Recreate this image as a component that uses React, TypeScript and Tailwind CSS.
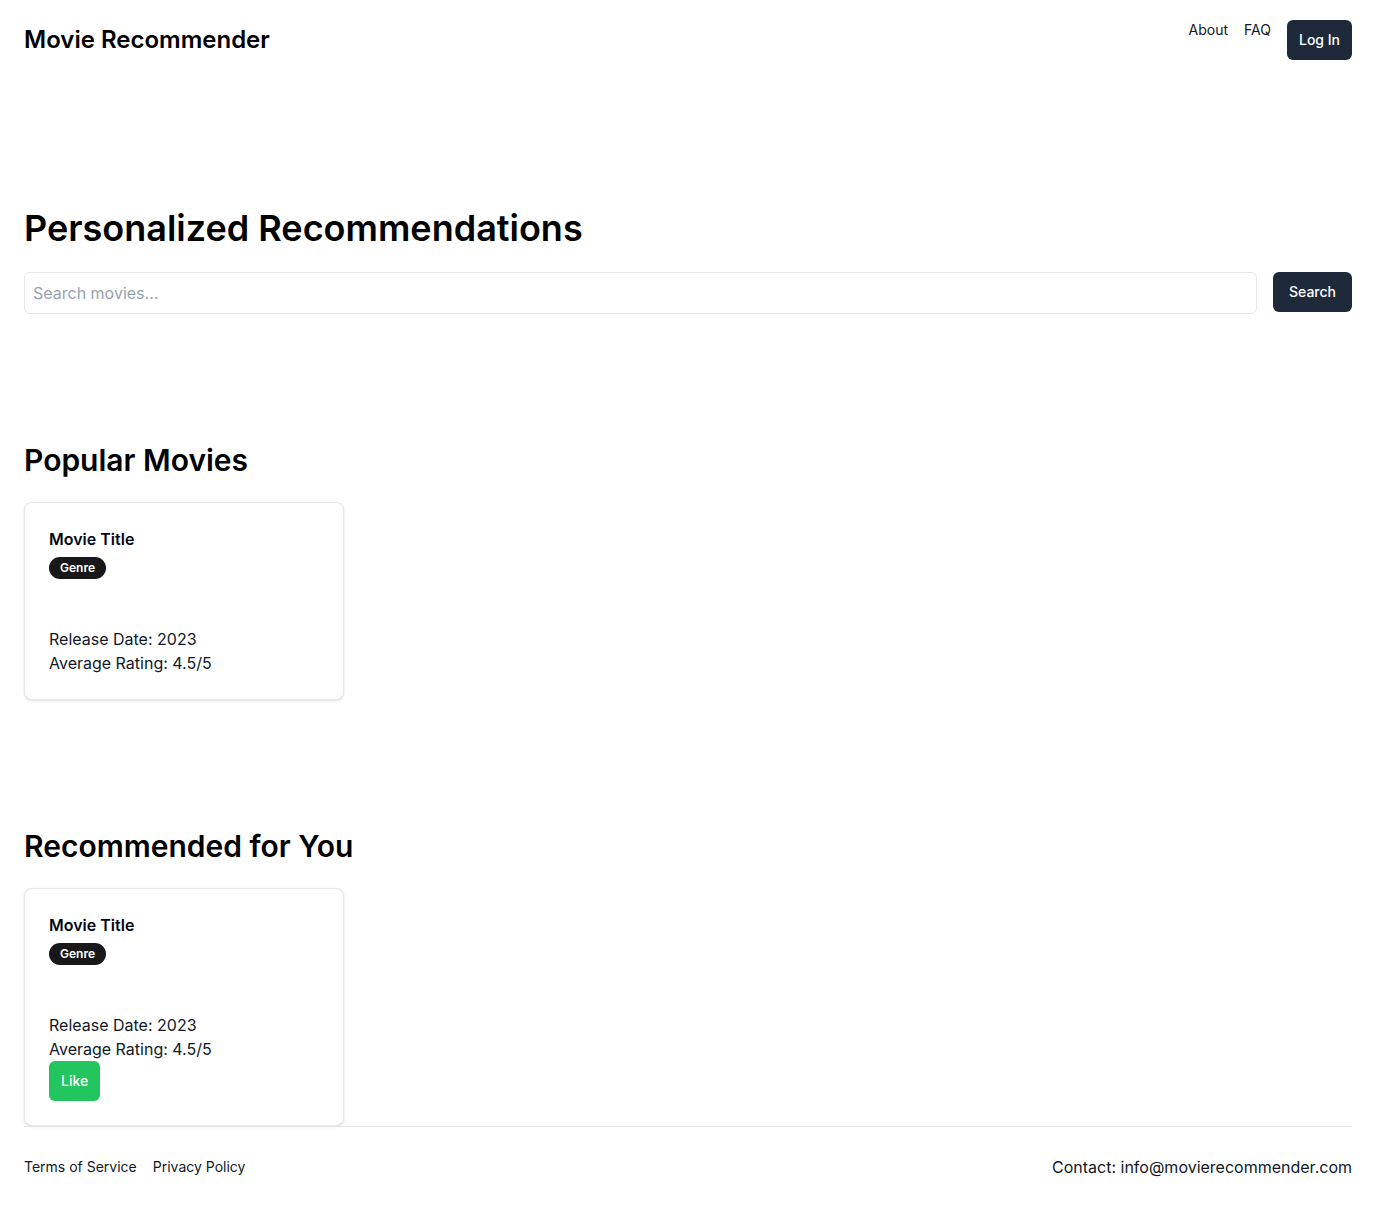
import React from 'react';

const MovieCard = ({ showLike = false }: { showLike?: boolean }) => (
  <div className="w-[320px] rounded-lg border border-gray-200 bg-white p-6 shadow-sm">
    <h3 className="text-base font-semibold leading-6 text-gray-950">Movie Title</h3>
    <span className="mt-1.5 inline-flex h-[22px] items-center rounded-full bg-zinc-900 px-[11px] text-xs font-semibold text-white">
      Genre
    </span>
    <div className="mt-12 text-base leading-6 text-gray-900">
      <p>Release Date: 2023</p>
      <p>Average Rating: 4.5/5</p>
    </div>
    {showLike && (
      <button className="h-10 rounded-md bg-[#22c55e] px-3 text-sm font-medium text-white">Like</button>
    )}
  </div>
);

export default function App() {
  return (
    <div className="min-h-screen bg-white px-6 font-['Inter',_sans-serif] text-gray-950">
      {/* Header */}
      <header className="flex items-start justify-between py-5">
        <h1 className="text-2xl font-semibold leading-10 text-black">Movie Recommender</h1>
        <div className="flex items-start gap-4">
          <nav className="flex items-start gap-4 text-sm leading-5 text-gray-900">
            <a href="#">About</a>
            <a href="#">FAQ</a>
          </nav>
          <button className="h-10 rounded-md bg-gray-800 px-3 text-sm font-medium text-white">Log In</button>
        </div>
      </header>

      {/* Hero / search */}
      <section className="pt-32">
        <h2 className="text-4xl font-semibold leading-10 text-black">Personalized Recommendations</h2>
        <div className="mt-6 flex items-start gap-4">
          <input
            type="text"
            placeholder="Search movies..."
            className="h-[42px] flex-1 rounded-md border border-gray-200 px-2 text-base text-gray-900 placeholder-gray-400 outline-none"
          />
          <button className="h-10 rounded-md bg-gray-800 px-4 text-sm font-medium text-white">Search</button>
        </div>
      </section>

      {/* Popular */}
      <section className="pt-32">
        <h2 className="text-3xl font-semibold leading-9 text-black">Popular Movies</h2>
        <div className="mt-6">
          <MovieCard />
        </div>
      </section>

      {/* Recommended */}
      <section className="pt-32">
        <h2 className="text-3xl font-semibold leading-9 text-black">Recommended for You</h2>
        <div className="mt-6">
          <MovieCard showLike />
        </div>
      </section>

      {/* Footer */}
      <footer className="flex items-center justify-between border-t border-gray-200 pt-7 pb-7">
        <div className="flex gap-4 text-sm leading-5 text-gray-900">
          <a href="#">Terms of Service</a>
          <a href="#">Privacy Policy</a>
        </div>
        <p className="text-base leading-6 text-gray-900">Contact: info@movierecommender.com</p>
      </footer>
    </div>
  );
}
